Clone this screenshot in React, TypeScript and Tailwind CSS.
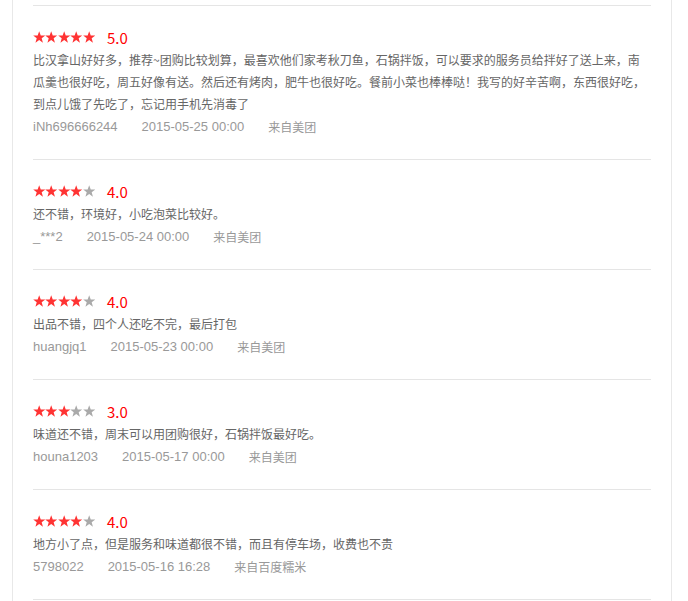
import React from 'react';

type Review = {
  score: number;
  text: string;
  user: string;
  time: string;
  source: string;
};

const reviews: Review[] = [
  {
    score: 5,
    text: '比汉拿山好好多，推荐~团购比较划算，最喜欢他们家考秋刀鱼，石锅拌饭，可以要求的服务员给拌好了送上来，南瓜羹也很好吃，周五好像有送。然后还有烤肉，肥牛也很好吃。餐前小菜也棒棒哒！我写的好辛苦啊，东西很好吃，到点儿饿了先吃了，忘记用手机先消毒了',
    user: 'iNh696666244',
    time: '2015-05-25 00:00',
    source: '来自美团',
  },
  {
    score: 4,
    text: '还不错，环境好，小吃泡菜比较好。',
    user: '_***2',
    time: '2015-05-24 00:00',
    source: '来自美团',
  },
  {
    score: 4,
    text: '出品不错，四个人还吃不完，最后打包',
    user: 'huangjq1',
    time: '2015-05-23 00:00',
    source: '来自美团',
  },
  {
    score: 3,
    text: '味道还不错，周末可以用团购很好，石锅拌饭最好吃。',
    user: 'houna1203',
    time: '2015-05-17 00:00',
    source: '来自美团',
  },
  {
    score: 4,
    text: '地方小了点，但是服务和味道都很不错，而且有停车场，收费也不贵',
    user: '5798022',
    time: '2015-05-16 16:28',
    source: '来自百度糯米',
  },
];

const Star: React.FC<{ on: boolean }> = ({ on }) => (
  <svg width="12.4" height="12" viewBox="0 0 24 23" className={on ? 'text-[#f33]' : 'text-[#aaa]'}>
    <polygon
      fill="currentColor"
      points="12,0.5 15,8.6 23.6,8.8 16.8,14.1 19.2,22.4 12,17.5 4.8,22.4 7.2,14.1 0.4,8.8 9,8.6"
    />
  </svg>
);

const Stars: React.FC<{ score: number }> = ({ score }) => (
  <div className="flex items-center">
    {[1, 2, 3, 4, 5].map((i) => (
      <Star key={i} on={i <= score} />
    ))}
  </div>
);

export default function App() {
  return (
    <div
      className="min-h-screen bg-white"
      style={{ fontFamily: '"Microsoft YaHei", "Noto Sans CJK SC", "Noto Sans", sans-serif' }}
    >
      <div className="ml-[12px] w-[660px] min-h-[601px] border-x border-[#e8e8e8] px-[20px] pt-[5px]">
        <ul>
          {reviews.map((r) => (
            <li key={r.user} className="border-t border-[#e5e5e5] pt-[19px] pb-[20px]">
              <div className="flex h-[24px] items-center">
                <Stars score={r.score} />
                <span className="ml-[12px] text-[15px] leading-none text-[#f00]">{r.score.toFixed(1)}</span>
              </div>
              <p className="text-[12px] leading-[22px] text-[#666]">{r.text}</p>
              <div className="flex h-[24px] items-center text-[#999]">
                <span className="mr-[24px] font-['Liberation_Sans',sans-serif] text-[13px]">{r.user}</span>
                <span className="mr-[24px] font-['Liberation_Sans',sans-serif] text-[13px]">{r.time}</span>
                <span className="text-[12px]">{r.source}</span>
              </div>
            </li>
          ))}
          <li className="border-t border-[#e5e5e5]" />
        </ul>
      </div>
    </div>
  );
}
